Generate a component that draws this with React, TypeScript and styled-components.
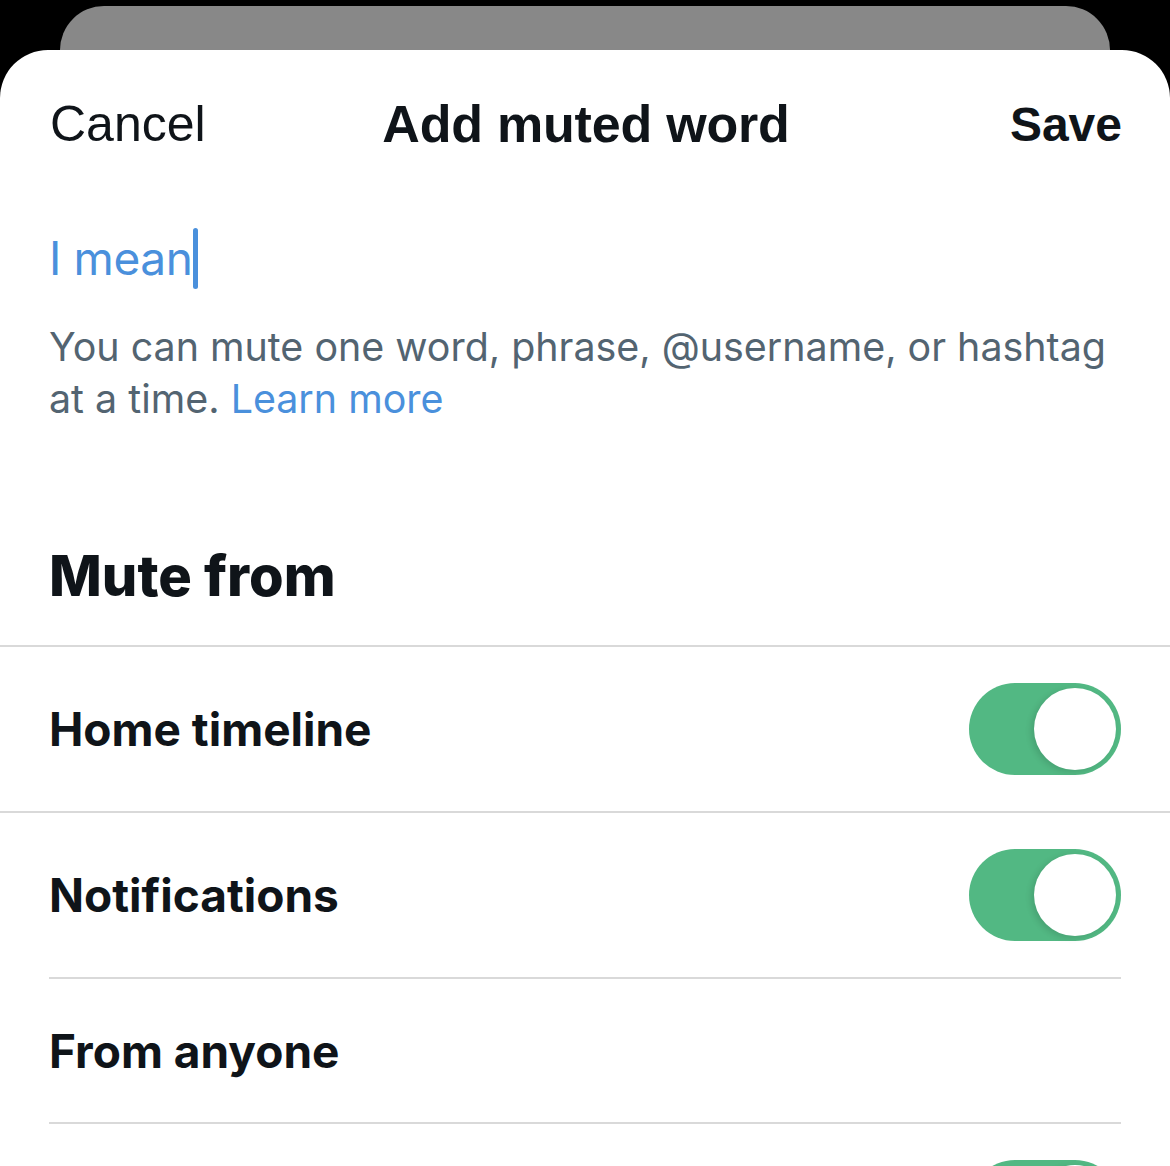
import styled, { createGlobalStyle } from "styled-components";

const GlobalStyle = createGlobalStyle`
  html, body {
    margin: 0;
    padding: 0;
    background: #000;
  }
  * {
    box-sizing: border-box;
  }
`;

const Screen = styled.div`
  width: 1170px;
  height: 1166px;
  overflow: hidden;
  background: #000;
  padding-top: 6px;
  display: flex;
  flex-direction: column;
  font-family: "Inter", "Liberation Sans", sans-serif;
`;

const BackCard = styled.div`
  height: 44px;
  margin: 0 60px;
  background: #888888;
  border-radius: 52px 52px 0 0;
  flex-shrink: 0;
`;

const Sheet = styled.div`
  flex: 1;
  background: #fff;
  border-radius: 48px 48px 0 0;
  display: flex;
  flex-direction: column;
`;

const Header = styled.div`
  height: 148px;
  padding: 0 48px 0 50px;
  display: flex;
  align-items: center;
  justify-content: space-between;
  font-family: "Liberation Sans", sans-serif;
  color: #0f1419;
`;

const HeaderButton = styled.span<{ $bold?: boolean }>`
  font-size: ${(p) => (p.$bold ? 48 : 50)}px;
  font-weight: ${(p) => (p.$bold ? 700 : 400)};
  width: 240px;
  text-align: ${(p) => (p.$bold ? "right" : "left")};
`;

const Title = styled.span`
  font-weight: 700;
  font-size: 52px;
  letter-spacing: -0.2px;
`;

const Body = styled.div`
  padding: 0 30px 0 49px;
`;

const InputLine = styled.div`
  margin-top: 28px;
  height: 64px;
  display: flex;
  align-items: center;
  font-size: 46px;
  letter-spacing: -0.4px;
  color: #4a90dc;
`;

const Caret = styled.span`
  display: inline-block;
  width: 5px;
  height: 61px;
  border-radius: 3px;
  background: #4a90dc;
  margin-left: 1px;
`;

const Hint = styled.p`
  margin: 31px 0 0;
  font-size: 39.4px;
  line-height: 52px;
  color: #536471;
`;

const Link = styled.span`
  color: #4a90dc;
`;

const SectionTitle = styled.h2`
  margin: 113px 0 0;
  font-size: 56px;
  line-height: 76px;
  font-weight: 800;
  color: #0f1419;
  padding-bottom: 31px;
`;

const Row = styled.div<{ $height: number; $inset?: boolean }>`
  height: ${(p) => p.$height}px;
  display: flex;
  align-items: center;
  justify-content: space-between;
  margin: 0 ${(p) => (p.$inset ? "49px" : "0")};
  padding: 0 ${(p) => (p.$inset ? "0" : "49px")};
  border-top: 2px solid #d9d9d9;
  flex-shrink: 0;
`;

const RowLabel = styled.span`
  font-size: 46px;
  font-weight: 700;
  color: #0f1419;
`;

const Toggle = styled.div`
  width: 152px;
  height: 92px;
  border-radius: 46px;
  background: #52b883;
  position: relative;
  flex-shrink: 0;
`;

const Knob = styled.div`
  position: absolute;
  top: 5px;
  right: 5px;
  width: 82px;
  height: 82px;
  border-radius: 50%;
  background: #fff;
  box-shadow: -3px 2px 6px rgba(0, 0, 0, 0.12);
`;

function Switch() {
  return (
    <Toggle>
      <Knob />
    </Toggle>
  );
}

export default function App() {
  return (
    <>
      <GlobalStyle />
      <Screen>
        <BackCard />
        <Sheet>
          <Header>
            <HeaderButton>Cancel</HeaderButton>
            <Title>Add muted word</Title>
            <HeaderButton $bold>Save</HeaderButton>
          </Header>
          <Body>
            <InputLine>
              I mean
              <Caret />
            </InputLine>
            <Hint>
              You can mute one word, phrase, @username, or hashtag at a time.{" "}
              <Link>Learn more</Link>
            </Hint>
            <SectionTitle>Mute from</SectionTitle>
          </Body>
          <Row $height={166}>
            <RowLabel>Home timeline</RowLabel>
            <Switch />
          </Row>
          <Row $height={166}>
            <RowLabel>Notifications</RowLabel>
            <Switch />
          </Row>
          <Row $height={145} $inset>
            <RowLabel>From anyone</RowLabel>
          </Row>
          <Row $height={166} $inset>
            <span />
            <Switch />
          </Row>
        </Sheet>
      </Screen>
    </>
  );
}
